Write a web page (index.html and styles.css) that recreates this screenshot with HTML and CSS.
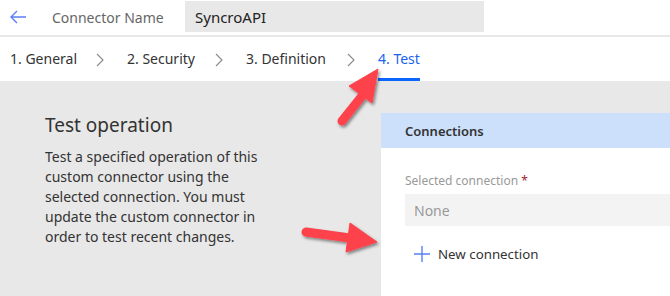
FILE: index.html
```html
<!DOCTYPE html>
<html>
<head>
<meta charset="utf-8">
<link rel="stylesheet" href="styles.css">
</head>
<body>
<div class="page">
  <header class="topbar">
    <svg class="back" width="18" height="14" viewBox="0 0 18 14"><path d="M8 1 L2 7 L8 13 M2 7 H17" fill="none" stroke="#5b7ff5" stroke-width="1.4"/></svg>
    <span class="name-label">Connector Name</span>
    <div class="name-input">SyncroAPI</div>
  </header>
  <nav class="tabs">
    <div class="step step-1"><span class="tab">1. General</span><svg class="chev" width="8" height="14" viewBox="0 0 8 14"><path d="M1 1 L7 7 L1 13" fill="none" stroke="#888" stroke-width="1.1"/></svg></div>
    <div class="step step-2"><span class="tab">2. Security</span><svg class="chev" width="8" height="14" viewBox="0 0 8 14"><path d="M1 1 L7 7 L1 13" fill="none" stroke="#888" stroke-width="1.1"/></svg></div>
    <div class="step step-3"><span class="tab">3. Definition</span><svg class="chev" width="8" height="14" viewBox="0 0 8 14"><path d="M1 1 L7 7 L1 13" fill="none" stroke="#888" stroke-width="1.1"/></svg></div>
    <div class="step"><span class="tab active">4. Test</span></div>
  </nav>
  <main class="body">
    <section class="intro">
      <h1 class="title">Test operation</h1>
      <p class="desc">Test a specified operation of this custom connector using the selected connection. You must update the custom connector in order to test recent changes.</p>
    </section>
    <section class="panel">
      <div class="panel-head">Connections</div>
      <div class="panel-body">
        <div class="field-label">Selected connection <span class="req">*</span></div>
        <div class="select">None</div>
        <div class="new-conn">
          <svg width="18" height="18" viewBox="0 0 18 18"><path d="M9 1 V17 M1 9 H17" stroke="#5b7ff5" stroke-width="1.4" fill="none"/></svg>
          <span>New connection</span>
        </div>
      </div>
    </section>
  </main>
  <svg class="arrows" width="670" height="296" viewBox="0 0 670 296">
    <defs>
      <filter id="sh" x="-20%" y="-20%" width="160%" height="160%">
        <feDropShadow dx="1.5" dy="2" stdDeviation="1.5" flood-color="#000" flood-opacity="0.45"/>
      </filter>
    </defs>
    <g filter="url(#sh)" fill="#fd434b" stroke="#fd434b">
      <line x1="342" y1="121" x2="362" y2="96" stroke-width="9" stroke-linecap="round"/>
      <polygon points="378,69 349,86 372,103" stroke-width="1" stroke-linejoin="round"/>
      <line x1="306" y1="232" x2="350" y2="238" stroke-width="9" stroke-linecap="round"/>
      <polygon points="350,223 377,242 346,252" stroke-width="1" stroke-linejoin="round"/>
    </g>
  </svg>
</div>
</body>
</html>
```
FILE: styles.css
```css
* { box-sizing: border-box; }
html, body { margin: 0; padding: 0; }
body {
  font-family: "Noto Sans", "Open Sans", sans-serif;
  color: #333;
  background: #fff;
}
.page {
  position: relative;
  width: 670px;
  height: 296px;
  overflow: hidden;
  display: flex;
  flex-direction: column;
}
.topbar {
  height: 37px;
  display: flex;
  align-items: flex-start;
  border-bottom: 2px solid #e8e8e8;
  flex: none;
}
.back { margin: 10px 0 0 9px; }
.name-label {
  margin: 7px 0 0 25px;
  font-size: 14px;
  color: #666;
  width: 133px;
  padding-top: 1px;
}
.name-input {
  margin-top: 1px;
  width: 299px;
  height: 31px;
  background: #e8e8e8;
  font-size: 15px;
  color: #222;
  padding: 6px 0 0 10px;
}
.tabs {
  height: 44px;
  flex: none;
  display: flex;
  align-items: flex-start;
  padding-left: 10px;
  font-size: 14px;
}
.step {
  display: flex;
  align-items: flex-start;
}
.step-1 { width: 117px; }
.step-2 { width: 119px; }
.step-3 { width: 132px; }
.tab {
  padding-top: 12px;
  height: 44px;
  color: #333;
}
.tab.active {
  color: #1a63f0;
  border-bottom: 3px solid #0a66ff;
}
.chev {
  margin: 16px 23px 0 auto;
}
.body {
  flex: 1;
  background: #e8e8e8;
  display: flex;
}
.intro {
  width: 381px;
  padding: 31px 0 0 45px;
}
.title {
  margin: 0;
  font-size: 19px;
  font-weight: 400;
  line-height: 26px;
  color: #333;
}
.desc {
  margin: 9px 0 0;
  width: 235px;
  font-size: 14px;
  line-height: 20px;
  color: #333;
}
.panel {
  margin-top: 32px;
  flex: 1;
  background: #fff;
}
.panel-head {
  height: 35px;
  background: #cce0fb;
  padding: 9px 0 0 24px;
  font-size: 13px;
  font-weight: 600;
  color: #333;
}
.panel-body {
  padding: 24px 0 0 24px;
}
.field-label {
  font-size: 12px;
  color: #999;
  height: 21px;
}
.req { color: #a4262c; }
.select {
  margin-top: 1px;
  height: 32px;
  background: #f3f3f3;
  padding: 7px 0 0 9px;
  font-size: 14px;
  color: #999;
}
.new-conn {
  margin-top: 19px;
  display: flex;
  align-items: center;
  gap: 7px;
  padding-left: 8px;
  font-size: 13.3px;
  color: #333;
}
.arrows {
  position: absolute;
  left: 0;
  top: 0;
  pointer-events: none;
}
```
